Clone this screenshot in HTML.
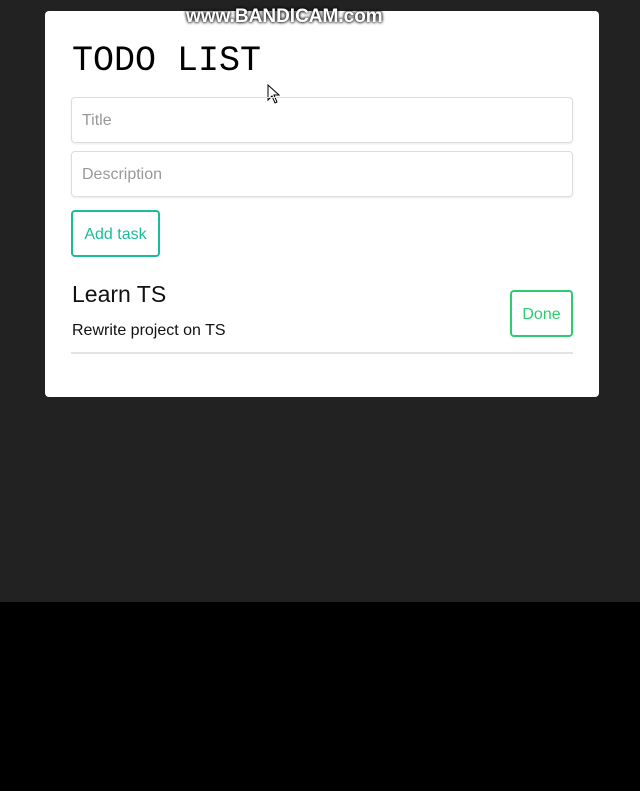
<!DOCTYPE html>
<html><head><meta charset="utf-8"><style>
body{margin:0;width:640px;height:791px;background:#000;position:relative;overflow:hidden;font-family:"Liberation Sans",sans-serif}
.bg{position:absolute;left:0;top:0;width:640px;height:602px;background:#222}
.card{position:absolute;left:45px;top:11px;width:554px;height:386px;background:#fff;border-radius:4px}
.wm{position:absolute;left:186px;top:6px;font:bold 19px "Liberation Sans",sans-serif;color:#fff;text-shadow:0 0 3px #000,0 0 3px #000}
h1{position:absolute;left:72px;top:39px;margin:0;font:normal 35px/44px "Liberation Mono",monospace;color:#000}
.inp{position:absolute;left:71px;border:1px solid #ddd;border-radius:4px;box-shadow:0 1px 2px rgba(0,0,0,.08);color:#999;font-size:16px;line-height:46px;padding-left:10px;box-sizing:border-box;width:502px;height:46px}
.btn{position:absolute;border:2px solid #1abc9c;border-radius:4px;color:#1abc9c;font-size:16px;box-sizing:border-box;text-align:center}
</style></head><body>
<div class="bg"></div>
<div class="card"></div>
<div class="wm">www.BANDICAM.com</div>
<h1>TODO LIST</h1>
<svg style="position:absolute;left:267px;top:84px" width="14" height="22" viewBox="0 0 14 22"><path d="M1 1 L1 16 L5 12 L8 19 L10 18 L7 11 L12 11 Z" fill="#fff" stroke="#000" stroke-width="1"/></svg>
<div class="inp" style="top:97px">Title</div>
<div class="inp" style="top:151px">Description</div>
<div class="btn" style="left:71px;top:210px;width:89px;height:47px;line-height:46px">Add task</div>
<div style="position:absolute;left:72px;top:281px;font-size:23px;color:#111">Learn TS</div>
<div style="position:absolute;left:72px;top:322px;font-size:16px;color:#111">Rewrite project on TS</div>
<div class="btn" style="left:510px;top:290px;width:63px;height:47px;line-height:46px;border-color:#2ecc71;color:#2ecc71">Done</div>
<div style="position:absolute;left:71px;top:352px;width:502px;height:2px;background:#e3e3e3"></div>
</body></html>
